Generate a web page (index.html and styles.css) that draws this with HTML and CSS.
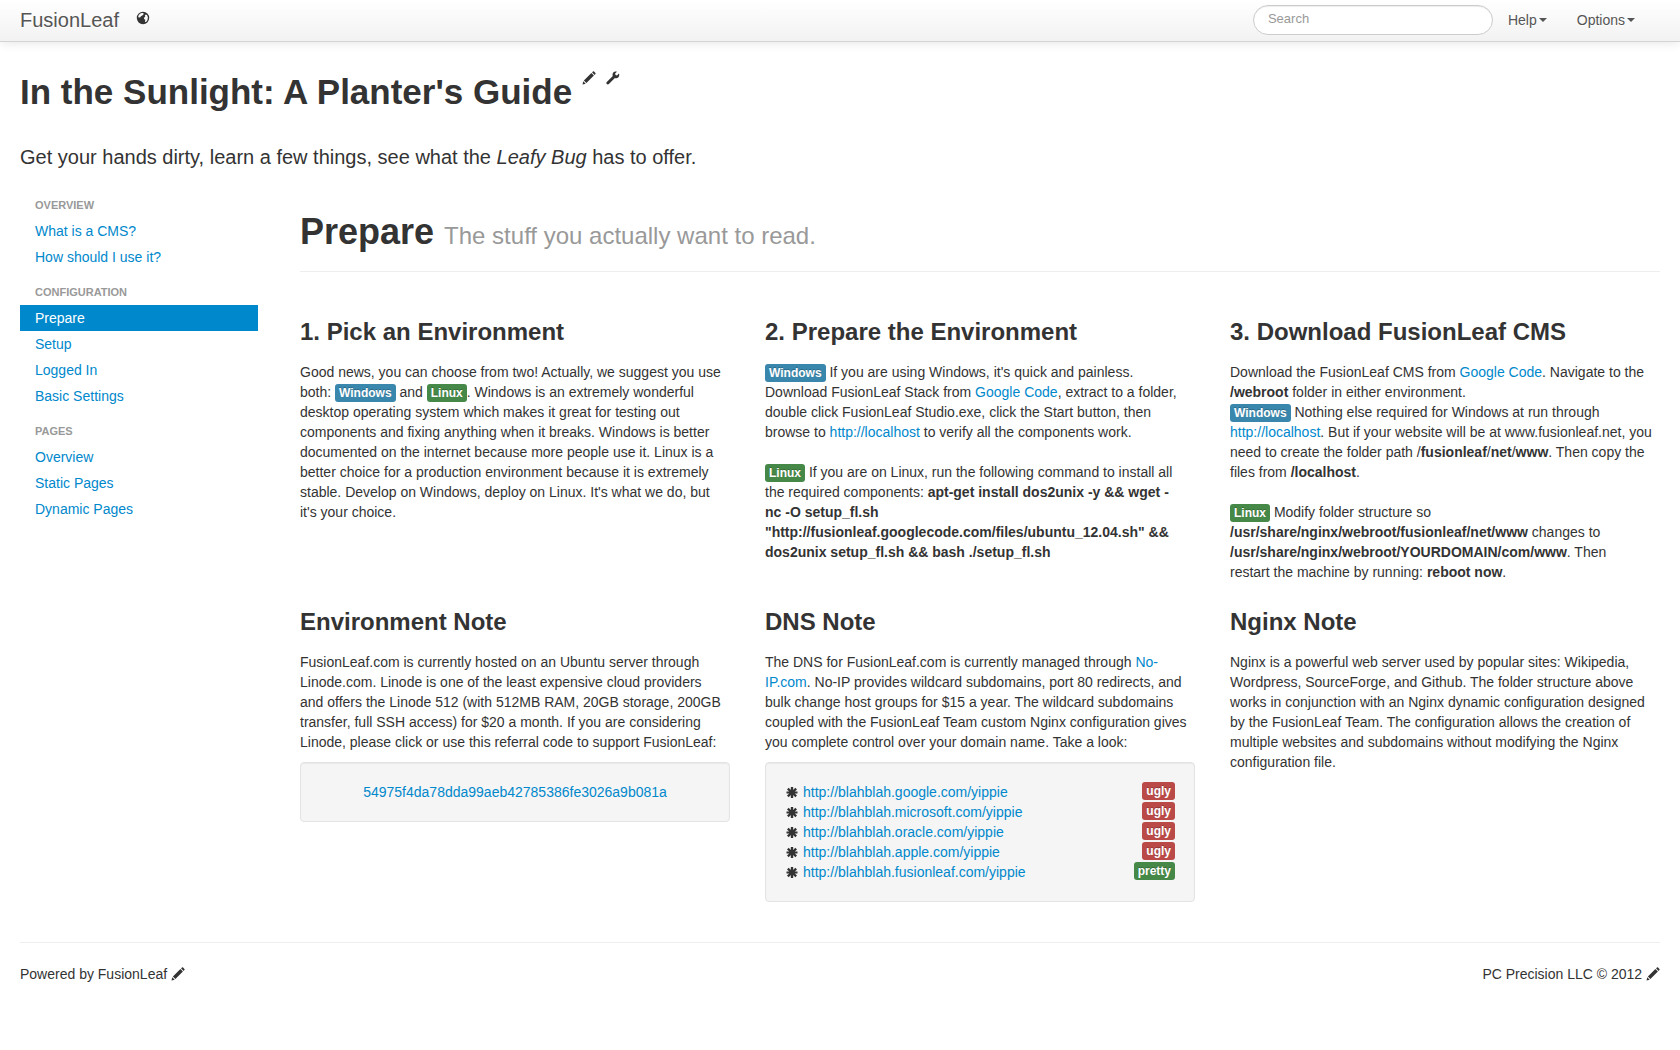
FILE: index.html
```html
<!DOCTYPE html>
<html lang="en">
<head>
<meta charset="utf-8">
<title>In the Sunlight: A Planter's Guide</title>
<link rel="stylesheet" href="styles.css">
</head>
<body>
<svg class="sprite" aria-hidden="true">
  <symbol id="pencil" viewBox="0 0 14 14"><path d="M.5 13.500 1.300 10.300 3.700 12.700ZM1.900 9.600 9.400 2.100 11.900 4.600 4.400 12.100ZM10.100 1.400 10.900.6Q11.500 0 12.100.6L13.400 1.900Q14 2.500 13.400 3.100L12.600 3.900Z"/></symbol>
  <symbol id="wrench" viewBox="0 0 14 14"><path d="M12.9 2.6 11 4.4 9.5 4 9.1 2.6 10.9.7C9.4.1 7.8.6 7 1.9 6.4 2.8 6.4 3.9 6.8 4.9L.8 10.9C.2 11.5.2 12.4.8 13 1.4 13.6 2.3 13.5 2.9 13L8.9 7C10 7.4 11.3 7.3 12.2 6.5 13.3 5.5 13.6 4 12.9 2.6Z"/></symbol>
  <symbol id="globe" viewBox="0 0 14 14"><path fill-rule="evenodd" d="M7 .8A6.2 6.2 0 1 1 7 13.200 6.200 6.200 0 0 1 7 .8ZM5.600 1.900 3.900 2.700 2.500 4.400 2.200 6.300 3.500 6.500 4.400 6.200 4.900 5.300 6.300 4.600 7.700 3.200 7.200 2ZM9.600 3.600 8.800 4.800 9.300 5.600 8.200 6.600 8 8 9.300 8.700 9 10.900 10.100 11 11.500 9 11.900 6.200 11 4Z"/></symbol>
  <symbol id="asterisk" viewBox="0 0 14 14"><path d="M5.800 2H8.200V5L10.300 2.700 12 4.400 9.800 6.500H12.500V8.500H9.800L12 10.600 10.300 12.300 8.200 10V13H5.800V10L3.700 12.300 2 10.600 4.200 8.500H1.500V6.500H4.200L2 4.400 3.700 2.700 5.800 5Z"/></symbol>
</svg>

<header class="navbar">
  <a class="brand" href="#">FusionLeaf</a>
  <a class="nav-icon" href="#" aria-label="Site"><svg class="icon"><use href="#globe"/></svg></a>
  <form class="search"><input type="text" placeholder="Search" aria-label="Search"></form>
  <nav class="menus">
    <button type="button" class="menu">Help<span class="caret"></span></button>
    <button type="button" class="menu">Options<span class="caret"></span></button>
  </nav>
</header>

<div class="container">
  <div class="title">
    <h1>In the Sunlight: A Planter's Guide</h1>
    <a href="#" aria-label="Edit title"><svg class="icon"><use href="#pencil"/></svg></a>
    <a href="#" aria-label="Page settings"><svg class="icon"><use href="#wrench"/></svg></a>
  </div>
  <p class="lead">Get your hands dirty, learn a few things, see what the <em>Leafy Bug</em> has to offer.</p>

  <div class="layout">
    <nav class="sidebar">
      <h2>Overview</h2>
      <ul>
        <li><a href="#">What is a CMS?</a></li>
        <li><a href="#">How should I use it?</a></li>
      </ul>
      <h2>Configuration</h2>
      <ul>
        <li><a class="active" href="#">Prepare</a></li>
        <li><a href="#">Setup</a></li>
        <li><a href="#">Logged In</a></li>
        <li><a href="#">Basic Settings</a></li>
      </ul>
      <h2>Pages</h2>
      <ul>
        <li><a href="#">Overview</a></li>
        <li><a href="#">Static Pages</a></li>
        <li><a href="#">Dynamic Pages</a></li>
      </ul>
    </nav>

    <main>
      <div class="page-header">
        <h1>Prepare <small>The stuff you actually want to read.</small></h1>
      </div>
      <div class="columns">
        <section>
          <h3>1. Pick an Environment</h3>
          <p>Good news, you can choose from two! Actually, we suggest you use both: <span class="label info">Windows</span> and <span class="label success">Linux</span>. Windows is an extremely wonderful desktop operating system which makes it great for testing out components and fixing anything when it breaks. Windows is better documented on the internet because more people use it. Linux is a better choice for a production environment because it is extremely stable. Develop on Windows, deploy on Linux. It's what we do, but it's your choice.</p>
        </section>
        <section>
          <h3>2. Prepare the Environment</h3>
          <p><span class="label info">Windows</span> If you are using Windows, it's quick and painless. Download FusionLeaf Stack from <a href="#">Google Code</a>, extract to a folder, double click FusionLeaf Studio.exe, click the Start button, then browse to <a href="#">http://localhost</a> to verify all the components work.<br><br>
          <span class="label success">Linux</span> If you are on Linux, run the following command to install all the required components: <strong>apt-get install dos2unix -y &amp;&amp; wget -<br>nc -O setup_fl.sh "http://fusionleaf.googlecode.com/files/ubuntu_12.04.sh" &amp;&amp; dos2unix setup_fl.sh &amp;&amp; bash ./setup_fl.sh</strong></p>
        </section>
        <section>
          <h3>3. Download FusionLeaf CMS</h3>
          <p>Download the FusionLeaf CMS from <a href="#">Google Code</a>. Navigate to the <strong>/webroot</strong> folder in either environment.<br>
          <span class="label info">Windows</span> Nothing else required for Windows at run through <a href="#">http://localhost</a>. But if your website will be at www.fusionleaf.net, you need to create the folder path /<strong>fusionleaf</strong>/<strong>net</strong>/<strong>www</strong>. Then copy the files from <strong>/localhost</strong>.<br><br>
          <span class="label success">Linux</span> Modify folder structure so <strong>/usr/share/nginx/webroot/fusionleaf/net/www</strong> changes to <strong>/usr/share/nginx/webroot/YOURDOMAIN/com/www</strong>. Then<br>restart the machine by running: <strong>reboot now</strong>.</p>
        </section>
        <section>
          <h3>Environment Note</h3>
          <p>FusionLeaf.com is currently hosted on an Ubuntu server through Linode.com. Linode is one of the least expensive cloud providers<br>and offers the Linode 512 (with 512MB RAM, 20GB storage, 200GB transfer, full SSH access) for $20 a month. If you are considering Linode, please click or use this referral code to support FusionLeaf:</p>
          <div class="well code"><a href="#">54975f4da78dda99aeb42785386fe3026a9b081a</a></div>
        </section>
        <section>
          <h3>DNS Note</h3>
          <p>The DNS for FusionLeaf.com is currently managed through <a href="#">No-IP.com</a>. No-IP provides wildcard subdomains, port 80 redirects, and bulk change host groups for $15 a year. The wildcard subdomains coupled with the FusionLeaf Team custom Nginx configuration gives you complete control over your domain name. Take a look:</p>
          <ul class="well">
            <li><svg class="icon"><use href="#asterisk"/></svg><a href="#">http://blahblah.google.com/yippie</a><span class="label important">ugly</span></li>
            <li><svg class="icon"><use href="#asterisk"/></svg><a href="#">http://blahblah.microsoft.com/yippie</a><span class="label important">ugly</span></li>
            <li><svg class="icon"><use href="#asterisk"/></svg><a href="#">http://blahblah.oracle.com/yippie</a><span class="label important">ugly</span></li>
            <li><svg class="icon"><use href="#asterisk"/></svg><a href="#">http://blahblah.apple.com/yippie</a><span class="label important">ugly</span></li>
            <li><svg class="icon"><use href="#asterisk"/></svg><a href="#">http://blahblah.fusionleaf.com/yippie</a><span class="label success">pretty</span></li>
          </ul>
        </section>
        <section>
          <h3>Nginx Note</h3>
          <p>Nginx is a powerful web server used by popular sites: Wikipedia, Wordpress, SourceForge, and Github. The folder structure above works in conjunction with an Nginx dynamic configuration designed by the FusionLeaf Team. The configuration allows the creation of multiple websites and subdomains without modifying the Nginx configuration file.</p>
        </section>
      </div>
    </main>
  </div>

  <footer>
    <span>Powered by FusionLeaf <a href="#" aria-label="Edit left footer"><svg class="icon"><use href="#pencil"/></svg></a></span>
    <span>PC Precision LLC © 2012 <a href="#" aria-label="Edit right footer"><svg class="icon"><use href="#pencil"/></svg></a></span>
  </footer>
</div>
</body>
</html>
```
FILE: styles.css
```css
* { box-sizing: border-box; }
body {
  margin: 0;
  background: #fff;
  color: #333;
  font: 14px/20px "Liberation Sans", Arial, sans-serif;
}
a { color: #08c; text-decoration: none; }
h1, h2, h3, p, ul { margin: 0; padding: 0; }
ul { list-style: none; }
.sprite { display: none; }
.icon {
  display: inline-block;
  width: 14px;
  height: 14px;
  fill: #333;
  vertical-align: text-top;
}

.navbar {
  display: flex;
  align-items: flex-start;
  height: 42px;
  padding: 0 30px 0 20px;
  border-bottom: 1px solid #d4d4d4;
  background: linear-gradient(#fff, #f2f2f2);
  box-shadow: 0 1px 10px rgba(0, 0, 0, .1);
}
.brand {
  padding: 10px 17px 10px 0;
  color: #555;
  font-size: 20px;
  text-shadow: 0 1px 0 #fff;
}
.nav-icon { display: flex; padding-top: 11px; }
.search { margin-left: auto; padding-top: 5px; }
.search input {
  display: block;
  width: 240px;
  height: 30px;
  padding: 0 14px 3px;
  border: 1px solid #ccc;
  border-radius: 15px;
  background: #fff;
  box-shadow: inset 0 1px 1px rgba(0, 0, 0, .075);
  color: #555;
  font: 13px/20px "Liberation Sans", Arial, sans-serif;
}
.search input::placeholder { color: #999; opacity: 1; }
.menus { display: flex; }
.menu {
  display: flex;
  align-items: center;
  gap: 2px;
  padding: 10px 15px;
  border: 0;
  background: none;
  color: #555;
  font: inherit;
  text-shadow: 0 1px 0 #fff;
}
.caret {
  border: 4px solid transparent;
  border-top-color: #555;
  border-bottom: 0;
}

.container { padding: 29px 20px 56px; }
.title { display: flex; gap: 10px; }
.title h1 { font-size: 35px; line-height: 41px; }
.title a { display: flex; }
.lead {
  padding: 30px 0 20px;
  font-size: 20px;
  line-height: 30px;
}
.layout { display: grid; grid-template-columns: 238px 1fr; gap: 42px; }
.sidebar h2 {
  padding: 3px 15px;
  color: #999;
  font-size: 11px;
  line-height: 20px;
  text-transform: uppercase;
}
.sidebar ul { padding-bottom: 9px; }
.sidebar li a { display: block; padding: 3px 15px; }
.sidebar .active { background: #08c; color: #fff; }

.page-header {
  padding: 20px 0 19px;
  border-bottom: 1px solid #eee;
}
.page-header h1 { font-size: 36px; line-height: 40px; }
small { color: #999; font-size: 24px; font-weight: normal; line-height: 24px; }
.columns {
  display: grid;
  grid-template-columns: repeat(3, 1fr);
  gap: 10px 35px;
  padding: 30px 0 40px;
}
h3 { padding: 10px 0; font-size: 24px; line-height: 40px; }
.label {
  padding: 2px 4px;
  border-radius: 3px;
  color: #fff;
  font-size: 12px;
  font-weight: bold;
  line-height: 14px;
  text-shadow: 0 -1px 0 rgba(0, 0, 0, .25);
}
.info { background: #3a87ad; }
.success { background: #468847; }
.important { background: #b94a48; }
.well {
  margin-top: 10px;
  padding: 19px;
  border: 1px solid #e3e3e3;
  border-radius: 4px;
  background: #f5f5f5;
  box-shadow: inset 0 1px 1px rgba(0, 0, 0, .05);
}
.code { text-align: center; }
.well li { display: flex; align-items: flex-start; }
.well .icon { margin: 3px 4px 0 0; }
.well .label { margin-left: auto; }

footer {
  display: flex;
  justify-content: space-between;
  padding-top: 21px;
  border-top: 1px solid #eee;
}
footer .icon { margin-top: 1px; }
```
